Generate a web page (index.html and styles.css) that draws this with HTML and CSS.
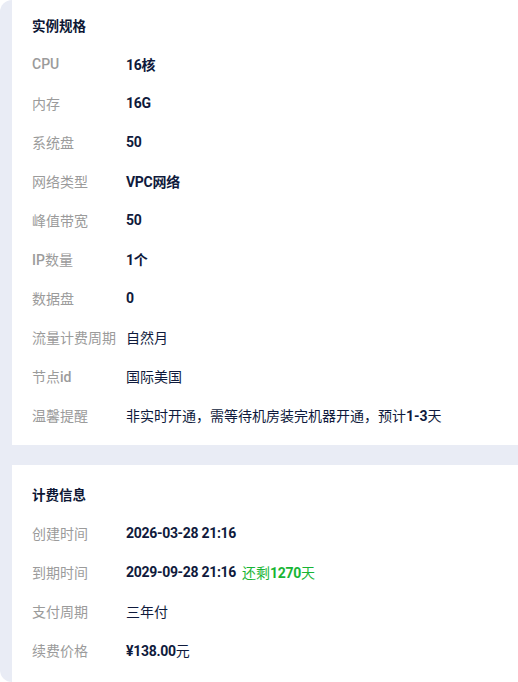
FILE: index.html
```html
<!DOCTYPE html>
<html lang="zh-CN">
<head>
<meta charset="utf-8">
<link rel="stylesheet" href="styles.css">
</head>
<body>
<div class="wrap">
  <section class="card card-spec">
    <div class="title">实例规格</div>
    <div class="row"><span class="label"><span class="en">CPU</span></span><span class="value b">16核</span></div>
    <div class="row"><span class="label">内存</span><span class="value b">16G</span></div>
    <div class="row"><span class="label">系统盘</span><span class="value b">50</span></div>
    <div class="row"><span class="label">网络类型</span><span class="value b">VPC网络</span></div>
    <div class="row"><span class="label">峰值带宽</span><span class="value b">50</span></div>
    <div class="row"><span class="label"><span class="en">IP</span>数量</span><span class="value b">1个</span></div>
    <div class="row"><span class="label">数据盘</span><span class="value b">0</span></div>
    <div class="row"><span class="label">流量计费周期</span><span class="value">自然月</span></div>
    <div class="row"><span class="label">节点<span class="en">id</span></span><span class="value">国际美国</span></div>
    <div class="row"><span class="label">温馨提醒</span><span class="value">非实时开通，需等待机房装完机器开通，预计<b>1-3</b>天</span></div>
  </section>
  <section class="card card-bill">
    <div class="title">计费信息</div>
    <div class="row"><span class="label">创建时间</span><span class="value b">2026-03-28 21:16</span></div>
    <div class="row"><span class="label">到期时间</span><span class="value b">2029-09-28 21:16</span><span class="remain">还剩<b>1270</b>天</span></div>
    <div class="row"><span class="label">支付周期</span><span class="value">三年付</span></div>
    <div class="row"><span class="label">续费价格</span><span class="value b">¥138.00<span class="n">元</span></span></div>
  </section>
</div>
</body>
</html>
```
FILE: styles.css
```css
html, body {
  margin: 0;
  padding: 0;
  background: #ffffff;
}
body {
  font-family: Roboto, "Noto Sans CJK SC", sans-serif;
  font-size: 14px;
  color: #0f1a3c;
}
.wrap {
  height: 682px;
  overflow: hidden;
  background: #e9ecf5;
  border-radius: 12px 0 0 12px;
  padding-left: 12px;
  display: flex;
  flex-direction: column;
  gap: 20px;
}
.card {
  background: #ffffff;
  padding-left: 20px;
}
.card-spec {
  padding-top: 5px;
  padding-bottom: 11px;
}
.card-bill {
  padding-top: 9px;
  flex: 1;
}
.title {
  height: 39px;
  display: flex;
  align-items: center;
  font-weight: 700;
  font-size: 13.5px;
  color: #0d1734;
}
.row {
  height: 39px;
  display: flex;
  align-items: center;
}
.label {
  width: 94px;
  flex: none;
  color: #9b9b9b;
}
.label .en {
  font-weight: 500;
}
.value {
  color: #0f1a3c;
}
.value.b {
  font-weight: 700;
  letter-spacing: -0.3px;
}
.value b {
  font-weight: 700;
}
.value .n {
  font-weight: 400;
  letter-spacing: 0;
}
.remain {
  margin-left: 6px;
  color: #18b534;
}
.remain b {
  font-weight: 700;
  letter-spacing: -0.3px;
}
```
